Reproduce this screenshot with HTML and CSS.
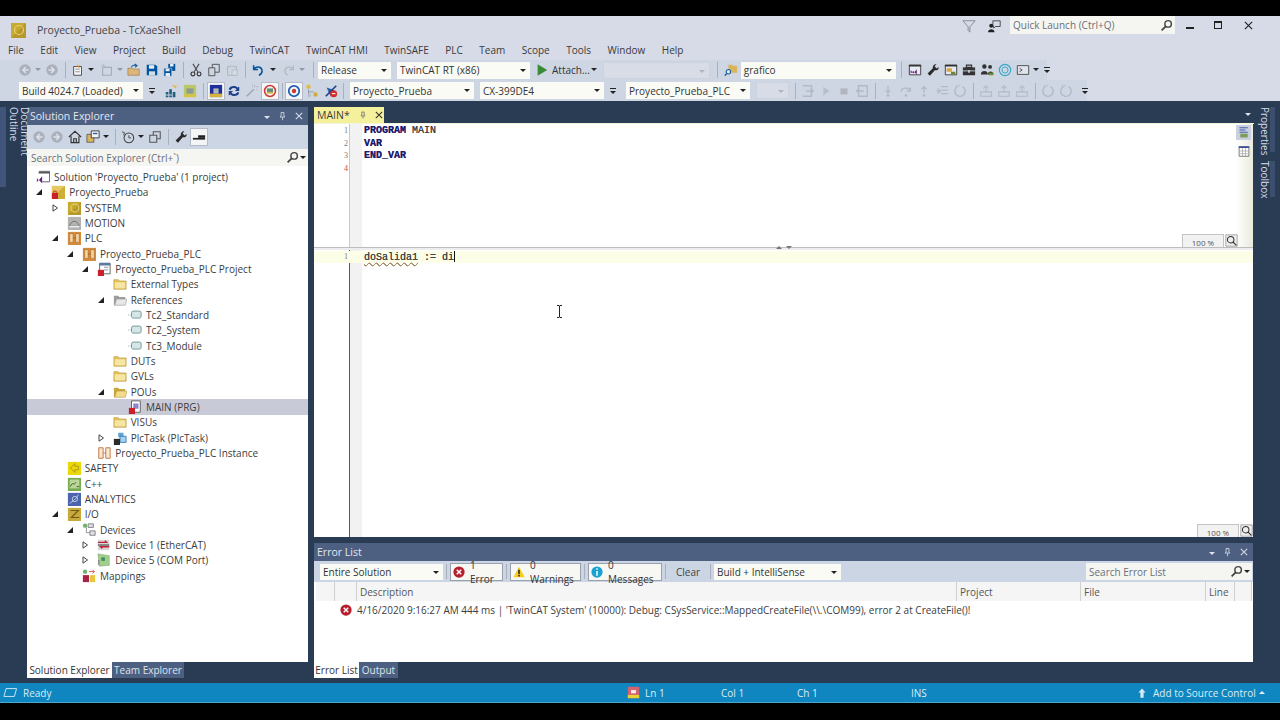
FILE: index.html
```html
<!DOCTYPE html>
<html lang="en">
<head>
<meta charset="utf-8">
<title>Proyecto_Prueba - TcXaeShell</title>
<link rel="stylesheet" href="styles.css">
</head>
<body>
<svg class="sprite" aria-hidden="true">
<symbol id="back" viewBox="0 0 16 16"><circle cx="8" cy="8" r="6.5" fill="#aab0bc"/><path d="M9 4.5 5.5 8 9 11.5M5.5 8H12" fill="none" stroke="#dfe3ea" stroke-width="1.6"/></symbol>
<symbol id="fwd" viewBox="0 0 16 16"><circle cx="8" cy="8" r="6.5" fill="#aab0bc"/><path d="M7 4.5 10.500 8 7 11.500M10.500 8H4" fill="none" stroke="#dfe3ea" stroke-width="1.6"/></symbol>
<symbol id="newp" viewBox="0 0 16 16"><path d="M3 4h9v10H3z" fill="#f4f4f4" stroke="#444"/><path d="M5 7h5M5 10h5" stroke="#888"/><path d="M7 1l1 2 2-1-1 2 2 1-3 0z" fill="#d9912f"/></symbol>
<symbol id="addi" viewBox="0 0 16 16"><path d="M3 5h10v9H3z" fill="none" stroke="#a7acb6" stroke-width="1.3"/><path d="M4 1v5M1.500 3.500h5" stroke="#b9bdc6" stroke-width="1.400"/></symbol>
<symbol id="open" viewBox="0 0 16 16"><path d="M1 6h5l1 1h7v7H1z" fill="#dcb67a" stroke="#8a6a2b" stroke-width=".6"/><path d="M5 5c1-3 4-3 6-2M9 1l2.500 2L9 5" fill="none" stroke="#1c5f9f" stroke-width="1.300"/></symbol>
<symbol id="save" viewBox="0 0 16 16"><path d="M2 2h10l2 2v10H2z" fill="#00539c"/><path d="M4.500 2.500h6v4h-6z" fill="#e6edf5"/><path d="M4.500 9.500h7V14h-7z" fill="#cfdcea"/></symbol>
<symbol id="saveall" viewBox="0 0 16 16"><path d="M6 1h8v8H6z" fill="#00539c"/><path d="M8 1h4v3H8z" fill="#e6edf5"/><path d="M1 6h9v9H1z" fill="#00539c" stroke="#ccd5e3" stroke-width=".7"/><path d="M3 6.500h4.500v3H3zM3 11.500h5V15H3z" fill="#e6edf5"/></symbol>
<symbol id="cut" viewBox="0 0 16 16"><path d="M4.500 1l5.500 9M11.500 1 6 10" stroke="#444" stroke-width="1.200" fill="none"/><circle cx="4.500" cy="12.500" r="2.200" fill="none" stroke="#333" stroke-width="1.300"/><circle cx="11.500" cy="12.500" r="2.200" fill="none" stroke="#333" stroke-width="1.300"/></symbol>
<symbol id="copy" viewBox="0 0 16 16"><path d="M6 1.500h8v9H6z" fill="none" stroke="#555" stroke-width="1.100"/><path d="M2 5.500h7v9H2z" fill="#ccd5e3" stroke="#555" stroke-width="1.100"/></symbol>
<symbol id="paste" viewBox="0 0 16 16"><path d="M3 4h10v10H3z" fill="none" stroke="#adb2bc" stroke-width="1.100"/><path d="M6 2h4v3H6z" fill="#c4c9d2"/><path d="M8 8h6v6H8z" fill="#d6dbe5" stroke="#b6bbc4"/></symbol>
<symbol id="undo" viewBox="0 0 16 16"><path d="M3 2.500v5h5M3.500 7c2-3.500 8-3 9 1 .5 2.500-1 5-3.500 6" fill="none" stroke="#00539c" stroke-width="1.700"/></symbol>
<symbol id="redo" viewBox="0 0 16 16"><path d="M13 2.500v5H8M12.500 7c-2-3.500-8-3-9 1-.5 2.500 1 5 3.500 6" fill="none" stroke="#b2b7c0" stroke-width="1.500"/></symbol>
<symbol id="play" viewBox="0 0 16 16"><path d="M3 1.500 14 8 3 14.500z" fill="#388a34"/></symbol>
<symbol id="findf" viewBox="0 0 16 16"><path d="M5 2h4l1 1h5v8H5z" fill="#d9b45c"/><circle cx="5" cy="10" r="2.500" fill="#dfeaf5" stroke="#1c5f9f" stroke-width="1.200"/><path d="M3 12l-2 2.500" stroke="#1c5f9f" stroke-width="1.600"/></symbol>
<symbol id="winvs" viewBox="0 0 16 16"><path d="M1.500 2.500h13v11h-13z" fill="#e8ebf2" stroke="#333"/><path d="M1 2h14v2H1z" fill="#333"/><path d="M3 8l3 4 4-5v6L6 9l-3 3z" fill="#68217a"/></symbol>
<symbol id="wrench" viewBox="0 0 16 16"><path d="M14.500 4.500c.4 2.600-2 4.600-4.500 3.700L4.500 14.500 1.800 12l6-6C7.200 3.200 9.400 1 12 1.500L9.800 3.800l2.300 2.400z" fill="#2a2a2a"/></symbol>
<symbol id="winaz" viewBox="0 0 16 16"><path d="M1.500 2.500h13v11h-13z" fill="#e8ebf2" stroke="#333"/><path d="M1 2h14v2H1z" fill="#333"/><path d="M3 6h6v4H3z" fill="#d9a441"/><path d="M8 10h5v3H8z" fill="#6a8a2f"/></symbol>
<symbol id="box" viewBox="0 0 16 16"><path d="M1 5h14v9H1z" fill="#333"/><path d="M5 2.500h6V5H5z" fill="none" stroke="#333" stroke-width="1.300"/><path d="M1 9h14" stroke="#ccd5e3"/><path d="M7 8h2v3H7z" fill="#ccd5e3"/></symbol>
<symbol id="people" viewBox="0 0 16 16"><circle cx="5" cy="4" r="2.500" fill="#333"/><circle cx="11.500" cy="4.500" r="2.200" fill="#333"/><path d="M1 13c0-5 8-5 8 0zM9 13c0-5 6.500-4 6.500 0z" fill="#333"/><path d="M10 11h5v3h-5z" fill="#6a8a2f"/></symbol>
<symbol id="cc" viewBox="0 0 16 16"><circle cx="8" cy="8" r="6.500" fill="none" stroke="#3aa8c9" stroke-width="1.300"/><circle cx="8" cy="8" r="3.500" fill="none" stroke="#3aa8c9" stroke-width="1.100"/></symbol>
<symbol id="term" viewBox="0 0 16 16"><path d="M1.500 3h13v10h-13z" fill="#dfe3ec" stroke="#444"/><path d="M4 6l3 2-3 2" fill="none" stroke="#444"/></symbol>
<symbol id="bars" viewBox="0 0 16 16"><path d="M2 9h3v3H2zM2 13h3v2H2zM6 13h3v2H6zM6 6h3v6H6zM10 9h3v6h-3z" fill="#1c5f7f"/><path d="M9 1l4 4 2-3z" fill="#e1b84b"/></symbol>
<symbol id="gold" viewBox="0 0 16 16"><path d="M1 1h14v14H1z" fill="#b9c96a"/><path d="M1 12h14v3H1z" fill="#d9c33c"/><path d="M4 5h8v6H4z" fill="#8f9a93"/></symbol>
<symbol id="screen" viewBox="0 0 16 16"><path d="M1 1h14v14H1z" fill="#1c2f9a"/><path d="M1 11h14v4H1z" fill="#d6b13c"/><path d="M5 5h6v6H5z" fill="#b0b5b8"/></symbol>
<symbol id="sync" viewBox="0 0 16 16"><path d="M2 6c1-4 7-5 10-2l2-1v5H9l2-2C9 4 6 4 4 7zM14 10c-1 4-7 5-10 2l-2 1V8h5L5 10c2 2 5 2 7-1z" fill="#1e3f8a"/></symbol>
<symbol id="wand" viewBox="0 0 16 16"><path d="M2 14 10 6" stroke="#a3a8b2" stroke-width="2"/><path d="M11 1v3M13 3h2M9 3h-1M13 6l1 1M9 1 8 0" stroke="#b4b9c2" stroke-width="1.200"/></symbol>
<symbol id="redc" viewBox="0 0 16 16"><circle cx="8" cy="8" r="6.200" fill="none" stroke="#d03a30" stroke-width="1.800"/><path d="M4.500 5h7v5h-7z" fill="#5a8f7a"/><path d="M4.500 9h7v2h-7z" fill="#d6b13c"/></symbol>
<symbol id="bluec" viewBox="0 0 16 16"><circle cx="8" cy="8" r="6" fill="none" stroke="#1c5fb5" stroke-width="2"/><circle cx="8" cy="8" r="2.500" fill="#d03a30"/></symbol>
<symbol id="ydots" viewBox="0 0 16 16"><circle cx="4" cy="3" r="2.500" fill="#e3bb3f"/><path d="M4 6v6M4 9h6" stroke="#8d96a6"/><circle cx="5" cy="13" r="2" fill="#b8bfc9"/><circle cx="12" cy="12" r="2.500" fill="#d2a93a"/></symbol>
<symbol id="cross" viewBox="0 0 16 16"><path d="M3 4l9 3-4 7-2-3z" fill="#2a5fb0"/><path d="M2 14 14 2" stroke="#1a3f8a" stroke-width="1.800"/><circle cx="11" cy="11" r="4" fill="#d52b2b"/><path d="M9 11h4" stroke="#fff" stroke-width="1.200"/></symbol>
<symbol id="dstep" viewBox="0 0 16 16"><path d="M2 2h10v12H2" fill="none" stroke="#b4b9c3" stroke-width="1.500"/><path d="M6 8h8M11 5l3 3-3 3" fill="none" stroke="#b4b9c3" stroke-width="1.500"/></symbol>
<symbol id="dplay" viewBox="0 0 16 16"><path d="M5 3l7 5-7 5z" fill="#b9bec8"/></symbol>
<symbol id="dstop" viewBox="0 0 16 16"><path d="M4 5h8v7H4z" fill="#b0b5bf"/></symbol>
<symbol id="dout" viewBox="0 0 16 16"><path d="M14 2H4v12h10z" fill="none" stroke="#b4b9c3" stroke-width="1.500"/><path d="M10 8H1M5 5 2 8l3 3" fill="none" stroke="#b4b9c3" stroke-width="1.500"/></symbol>
<symbol id="ddown" viewBox="0 0 16 16"><path d="M8 2v7M5 7l3 3 3-3" fill="none" stroke="#b4b9c3" stroke-width="1.500"/><circle cx="8" cy="13" r="1.500" fill="#b4b9c3"/></symbol>
<symbol id="dover" viewBox="0 0 16 16"><path d="M2 9c1-5 9-6 11-1M13 4v4H9" fill="none" stroke="#b4b9c3" stroke-width="1.500"/><circle cx="8" cy="13" r="1.500" fill="#b4b9c3"/></symbol>
<symbol id="dup" viewBox="0 0 16 16"><path d="M8 10V3M5 6l3-3 3 3" fill="none" stroke="#b4b9c3" stroke-width="1.500"/><circle cx="8" cy="13" r="1.500" fill="#b4b9c3"/></symbol>
<symbol id="dlist" viewBox="0 0 16 16"><path d="M1 8h4M3 5l3 3-3 3M7 3h8M7 7h8M7 11h8" fill="none" stroke="#b4b9c3" stroke-width="1.400"/></symbol>
<symbol id="dring" viewBox="0 0 16 16"><path d="M5 3a6 6 0 1 0 6 0" fill="none" stroke="#b4b9c3" stroke-width="1.600"/><path d="M3 2h5" stroke="#b4b9c3"/></symbol>
<symbol id="dtray" viewBox="0 0 16 16"><path d="M2 9v5h12V9z" fill="none" stroke="#b4b9c3" stroke-width="1.200"/><path d="M8 3v6M5 5l3-3 3 3" fill="none" stroke="#b4b9c3" stroke-width="1.200"/></symbol>
<symbol id="mag" viewBox="0 0 16 16"><circle cx="10" cy="6" r="4" fill="none" stroke="#444" stroke-width="1.800"/><path d="M7 9l-5 5" stroke="#444" stroke-width="2.200"/></symbol>
<symbol id="home" viewBox="0 0 16 16"><path d="M1 8l7-6.500L15 8M3.500 7v7.500h9V7M6.500 14.500V10h3v4.500" fill="none" stroke="#333" stroke-width="1.300"/></symbol>
<symbol id="filefolders" viewBox="0 0 16 16"><path d="M1 5h8v9H1z" fill="#d9b45c" stroke="#333" stroke-width=".7"/><path d="M6 1h9v8H6z" fill="#eef1f6" stroke="#333"/><path d="M8 4h5" stroke="#1c5f9f" stroke-width="1.500"/></symbol>
<symbol id="clock" viewBox="0 0 16 16"><circle cx="9" cy="9" r="5.500" fill="none" stroke="#444" stroke-width="1.200"/><path d="M9 6v3h2.500M1 2l3 1-1 3" fill="none" stroke="#444"/></symbol>
<symbol id="stack" viewBox="0 0 16 16"><path d="M6 2h8v8H6z" fill="none" stroke="#555" stroke-width="1.200"/><path d="M2 6h8v8H2z" fill="#ccd5e3" stroke="#555" stroke-width="1.200"/></symbol>
<symbol id="pinbar" viewBox="0 0 16 16"><path d="M1 9h14v2H1z" fill="#222"/><path d="M7 6h8v3H7z" fill="#222"/></symbol>
<symbol id="pin" viewBox="0 0 10 12"><path d="M3 1h4v5l1.500 1.500h-7L3 6zM5 7.500V12" fill="none" stroke="#d5dbe6" stroke-width="1.200"/></symbol>
<symbol id="x" viewBox="0 0 10 10"><path d="M1 1l8 8M9 1 1 9" stroke="currentColor" stroke-width="1.300"/></symbol>
<symbol id="tri" viewBox="0 0 8 8"><path d="M7 1v6H1z" fill="#222"/></symbol>
<symbol id="tro" viewBox="0 0 8 8"><path d="M2 .8 6.500 4 2 7.200z" fill="#fff" stroke="#444" stroke-width="1"/></symbol>
<symbol id="sln" viewBox="0 0 16 16"><path d="M3.500 1.500h12v12h-9" fill="#fff" stroke="#555"/><path d="M3 2h13v2H3z" fill="#555"/><path d="M1 9l2 3 4-5v8L3 11l-2 3z" fill="#68217a"/></symbol>
<symbol id="tcp" viewBox="0 0 16 16"><path d="M1 1h15v15H1z" fill="#cfae37"/><path d="M1 1h15L1 14z" fill="#e3c960"/><path d="M1 9h7v7H1z" fill="#c9202c"/><path d="M3 9V7h3v2" fill="none" stroke="#c9202c"/></symbol>
<symbol id="sys" viewBox="0 0 16 16"><path d="M1 1h15v15H1z" fill="#c7ab2e"/><path d="M16 1v15H1z" fill="#b8982a"/><circle cx="9" cy="8" r="4.500" fill="none" stroke="#e3d276" stroke-width="1.200"/></symbol>
<symbol id="mot" viewBox="0 0 16 16"><path d="M1 1h15v15H1z" fill="#b3b3b1"/><path d="M3 11c2-6 8-7 11 0z" fill="none" stroke="#6a6a6a"/><path d="M3 11h11v2H3z" fill="#eee"/></symbol>
<symbol id="plc" viewBox="0 0 16 16"><path d="M1 1h15v15H1z" fill="#d38b3d"/><path d="M3 3h4v10H3zM10 3h4v10h-4z" fill="#f3d6a6" stroke="#a55d1c" stroke-width=".6"/><path d="M7 8h3" stroke="#a55d1c"/></symbol>
<symbol id="prj" viewBox="0 0 16 16"><path d="M3 1.500h12v12H3z" fill="#fff" stroke="#555"/><path d="M3 1h12v3H3z" fill="#5b7aa3"/><path d="M8 6h5M8 9h5" stroke="#888"/><path d="M1 9h7v7H1z" fill="#c9202c"/></symbol>
<symbol id="fold" viewBox="0 0 16 16"><path d="M1 3h5l1 1.500h8V14H1z" fill="#e4c04f" stroke="#b69a48" stroke-width=".7"/><path d="M2 6h12v7H2z" fill="#f6e6a6"/></symbol>
<symbol id="foldg" viewBox="0 0 16 16"><path d="M1 3h5l1 1.500h7V7H5l-2 7H1z" fill="#9d9d9d"/><path d="M4 7h12l-2 7H2z" fill="#e7e7e7" stroke="#9d9d9d" stroke-width=".7"/></symbol>
<symbol id="foldo" viewBox="0 0 16 16"><path d="M1 3h5l1 1.500h7V7H5l-2 7H1z" fill="#c9a73d"/><path d="M4 7h12l-2 7H2z" fill="#f2dc8a" stroke="#b69a48" stroke-width=".7"/></symbol>
<symbol id="refi" viewBox="0 0 16 16"><path d="M0 8h3" stroke="#8fb6b0" stroke-width="1.400" stroke-dasharray="1 1"/><rect x="4" y="3.500" width="11" height="8" rx="2" fill="#d4e7e6" stroke="#6d8f90"/></symbol>
<symbol id="pou" viewBox="0 0 16 16"><path d="M4 1h10v13H4z" fill="#fff" stroke="#555"/><path d="M6 4h6v6H6z" fill="#8a88c8"/><path d="M1 9h7v7H1z" fill="#c9202c"/></symbol>
<symbol id="task" viewBox="0 0 16 16"><path d="M6 2h6v5H6z" fill="#5ba3d9"/><path d="M8 6h7v7H8z" fill="#a7cfee" stroke="#3a7ab0"/><path d="M1 9h7v7H1z" fill="#2a2a2a"/></symbol>
<symbol id="inst" viewBox="0 0 16 16"><path d="M2 2h5v12H2zM10 2h5v12h-5z" fill="#f9e6d2" stroke="#bd6f33"/><path d="M7 8h3" stroke="#bd6f33"/></symbol>
<symbol id="saf" viewBox="0 0 16 16"><path d="M1 1h15v15H1z" fill="#ecd60c"/><path d="M4 8l5-5v3h4v4H9v3z" fill="none" stroke="#a59412"/></symbol>
<symbol id="cpp" viewBox="0 0 16 16"><path d="M1 1h15v15H1z" fill="#79ac52"/><path d="M3 3h11v10H3z" fill="#bcd69a"/><path d="M4 11c2-7 4 0 6-5M11 11h3" stroke="#2b5a1c" fill="none"/></symbol>
<symbol id="ana" viewBox="0 0 16 16"><path d="M1 1h15v15H1z" fill="#4c64ad"/><path d="M3 13c3-2 8-5 10-10" stroke="#ccd3ea" fill="none"/><circle cx="9" cy="8" r="3" fill="none" stroke="#ccd3ea"/></symbol>
<symbol id="io" viewBox="0 0 16 16"><path d="M1 1h15v15H1z" fill="#c7a93c"/><path d="M4 4h9l-8 8h9" fill="none" stroke="#6e5c1a" stroke-width="1.300"/></symbol>
<symbol id="dev" viewBox="0 0 16 16"><circle cx="3.500" cy="3" r="2.500" fill="#6db36d"/><path d="M7 1h6v4H7zM9 9h6v5H9z" fill="#dfe3ea" stroke="#777"/><path d="M5 5v6h4" fill="none" stroke="#888"/></symbol>
<symbol id="eth" viewBox="0 0 16 16"><path d="M1 2h13v12H1z" fill="#d7d5d8"/><path d="M1 5h10l-2-2M14 10H4l2 2" stroke="#c3202c" stroke-width="1.500" fill="none"/><path d="M1 8h13" stroke="#222"/></symbol>
<symbol id="com" viewBox="0 0 16 16"><path d="M1 1l13 2v11L3 15z" fill="#9fd08b" stroke="#7a9c72" stroke-width=".6"/><path d="M5 5h4v4H5z" fill="#3f8a5a"/><path d="M2 14V8" stroke="#666"/></symbol>
<symbol id="map" viewBox="0 0 16 16"><circle cx="3.500" cy="3" r="2.500" fill="#6db36d"/><path d="M8 3h6M12 1l2 2-2 2" stroke="#d04343" fill="none"/><path d="M1 7h7v8H1z" fill="#a8224b"/><path d="M9 7h6v8H9z" fill="#e6c63c"/></symbol>
<symbol id="err" viewBox="0 0 16 16"><circle cx="8" cy="8" r="7.500" fill="#b81f2c"/><path d="M5 5l6 6M11 5l-6 6" stroke="#fff" stroke-width="2"/></symbol>
<symbol id="warn" viewBox="0 0 16 16"><path d="M8 1 15.500 15H.5z" fill="#f8cd1b"/><path d="M7 5h2v6H7zM7 12h2v2H7z" fill="#222"/></symbol>
<symbol id="info" viewBox="0 0 16 16"><circle cx="8" cy="8" r="7.500" fill="#1ba1d0"/><path d="M7 3h2v2H7zM7 6.500h2V13H7z" fill="#fff"/></symbol>
<symbol id="cmt" viewBox="0 0 16 16"><path d="M6 1h9v7H9l-2 2V8H6z" fill="none" stroke="#333"/><circle cx="4" cy="7" r="2.500" fill="#222"/><path d="M0 15c0-5 8-5 8 0z" fill="#222"/></symbol>
<symbol id="funnel" viewBox="0 0 16 16"><path d="M1 2h14L9 9v6L7 13V9z" fill="none" stroke="#7f858f"/></symbol>
<symbol id="status" viewBox="0 0 16 12"><path d="M3.500 1.500h12L13 10.500H1z" fill="none" stroke="#cfe5f2" stroke-width="1.100"/></symbol>
<symbol id="lock" viewBox="0 0 16 16"><path d="M1 1h14v14H1z" fill="#d5636f"/><path d="M1 11h14v4H1z" fill="#e9d12f"/><path d="M5 5h6v4H5z" fill="#eee"/></symbol>
<symbol id="uparr" viewBox="0 0 10 12"><path d="M5 .5 9.500 5.500H7V12H3V5.500H.5z" fill="#d6e9f5"/></symbol>
<symbol id="tbl" viewBox="0 0 16 16"><path d="M1.500 2h13v13h-13z" fill="#fff" stroke="#555"/><path d="M1 2h14v2H1z" fill="#3c4fa3"/><path d="M1.500 8h13M1.500 11.500h13M6 4v11M10 4v11" stroke="#aaa"/></symbol>
<symbol id="txt" viewBox="0 0 16 16"><path d="M2 1h11M2 4h8M2 7h11" stroke="#3c4fa3" stroke-width="1.200"/><path d="M3 9h10v5H3z" fill="#7b9c5a"/></symbol>
<symbol id="zm" viewBox="0 0 16 16"><path d="M1 1h14v14H1z" fill="#eee" stroke="#999"/><circle cx="7" cy="7" r="4" fill="none" stroke="#333" stroke-width="1.300"/><path d="M10 10l4 4" stroke="#333" stroke-width="1.500"/></symbol>
</svg>

<div class="frame">
  <header class="titlebar">
    <svg class="logo"><use href="#sys"/></svg>
    <span class="apptitle">Proyecto_Prueba - TcXaeShell</span>
    <svg class="ic16 funnel"><use href="#funnel"/></svg>
    <svg class="ic16 cmt"><use href="#cmt"/></svg>
    <div class="quick"><span>Quick Launch (Ctrl+Q)</span><svg class="ic14"><use href="#mag"/></svg></div>
    <div class="winbtns">
      <span class="minbtn"></span>
      <span class="restore"></span>
      <svg class="closeb"><use href="#x"/></svg>
    </div>
  </header>

  <nav class="menu">
    <span>File</span><span>Edit</span><span>View</span><span>Project</span><span>Build</span><span>Debug</span><span>TwinCAT</span><span>TwinCAT HMI</span><span>TwinSAFE</span><span>PLC</span><span>Team</span><span>Scope</span><span>Tools</span><span>Window</span><span>Help</span>
  </nav>

  <div class="toolbar t1">
    <i class="sp w9"></i><i class="grip"></i><i class="sp w3"></i>
    <span class="b"><svg><use href="#back"/></svg></span><span class="a dim"></span><span class="b"><svg><use href="#fwd"/></svg></span><i class="sep"></i>
    <span class="b"><svg><use href="#newp"/></svg></span><span class="a"></span><i class="sp w2"></i><span class="b"><svg><use href="#addi"/></svg></span><span class="a dim"></span>
    <span class="b"><svg><use href="#open"/></svg></span><span class="b"><svg><use href="#save"/></svg></span><span class="b"><svg><use href="#saveall"/></svg></span><i class="sep"></i>
    <span class="b"><svg><use href="#cut"/></svg></span><span class="b"><svg><use href="#copy"/></svg></span><span class="b"><svg><use href="#paste"/></svg></span><i class="sep"></i>
    <span class="b"><svg><use href="#undo"/></svg></span><i class="sp w2"></i><span class="a"></span><i class="sp w2"></i><span class="b"><svg><use href="#redo"/></svg></span><span class="a dim"></span><i class="sp w2"></i>
    <i class="sep"></i>
    <span class="combo c73 ml1">Release</span><i class="sp w6"></i><span class="combo c133">TwinCAT RT (x86)</span>
    <i class="sp w3"></i><span class="b"><svg><use href="#play"/></svg></span><i class="sp w1"></i><span class="attach">Attach...</span><span class="a"></span>
    <i class="sp w4"></i><span class="combo off c107"></span><i class="sp w4"></i><i class="sep"></i>
    <span class="b"><svg><use href="#findf"/></svg></span><span class="combo c155 ml1">grafico</span><i class="sp w2"></i><i class="sep"></i>
    <span class="b"><svg><use href="#winvs"/></svg></span><span class="b"><svg><use href="#wrench"/></svg></span><span class="b"><svg><use href="#winaz"/></svg></span><span class="b"><svg><use href="#box"/></svg></span><span class="b"><svg><use href="#people"/></svg></span><span class="b"><svg><use href="#cc"/></svg></span><span class="b"><svg><use href="#term"/></svg></span><span class="a"></span><span class="ovf"></span>
  </div>

  <div class="toolbar t2">
    <i class="sp w9"></i><i class="grip"></i><i class="sp w6"></i>
    <span class="combo c124">Build 4024.7 (Loaded)</span><span class="ovf ovf2"></span><i class="sp w3"></i><i class="grip"></i>
    <i class="sp w1"></i><span class="b"><svg><use href="#bars"/></svg></span><i class="sp w1"></i><span class="b"><svg><use href="#gold"/></svg></span><i class="sep"></i>
    <span class="b on"><svg><use href="#screen"/></svg></span><span class="b"><svg><use href="#sync"/></svg></span><span class="b"><svg><use href="#wand"/></svg></span><span class="b on"><svg><use href="#redc"/></svg></span><i class="sep sep4"></i>
    <span class="b on"><svg><use href="#bluec"/></svg></span><span class="b"><svg><use href="#ydots"/></svg></span><i class="sp w1"></i><span class="b"><svg><use href="#cross"/></svg></span><i class="sep sep4"></i>
    <i class="sp w4"></i><span class="combo c124">Proyecto_Prueba</span><i class="sp w6"></i><span class="combo c124">CX-399DE4</span><span class="ovf ovf2"></span><i class="sp w3"></i><i class="grip"></i><i class="sp w4"></i>
    <span class="combo c124">Proyecto_Prueba_PLC</span><i class="sp w6"></i><span class="combo off c33"></span><i class="sp w2"></i><i class="sep"></i>
    <span class="b"><svg><use href="#dstep"/></svg></span><span class="b"><svg><use href="#dplay"/></svg></span><span class="b"><svg><use href="#dstop"/></svg></span><span class="b"><svg><use href="#dout"/></svg></span><i class="sep"></i>
    <span class="b"><svg><use href="#ddown"/></svg></span><span class="b"><svg><use href="#dover"/></svg></span><span class="b"><svg><use href="#dup"/></svg></span><span class="b"><svg><use href="#dlist"/></svg></span><span class="b"><svg><use href="#dring"/></svg></span><i class="sep"></i>
    <span class="b"><svg><use href="#dtray"/></svg></span><span class="b"><svg><use href="#dtray"/></svg></span><span class="b"><svg><use href="#dtray"/></svg></span><i class="sep"></i>
    <span class="b"><svg><use href="#dring"/></svg></span><span class="b"><svg><use href="#dring"/></svg></span><span class="ovf ovf3"></span>
  </div>

  <main class="work">
    <aside class="rail left"><div class="vtab"><span>Document Outline</span></div></aside>

    <section class="solution">
      <div class="ptitle"><span>Solution Explorer</span><span class="pbtns"><i class="dn"></i><svg class="pinic"><use href="#pin"/></svg><svg class="xic"><use href="#x"/></svg></span></div>
      <div class="stool">
        <span class="b"><svg><use href="#back"/></svg></span><span class="b"><svg><use href="#fwd"/></svg></span><span class="b"><svg><use href="#home"/></svg></span><span class="b"><svg><use href="#filefolders"/></svg></span><span class="a"></span><i class="sep"></i>
        <span class="b"><svg><use href="#clock"/></svg></span><span class="a"></span><span class="b"><svg><use href="#stack"/></svg></span><i class="sep"></i>
        <span class="b"><svg><use href="#wrench"/></svg></span><span class="b on"><svg><use href="#pinbar"/></svg></span>
      </div>
      <div class="psearch"><span>Search Solution Explorer (Ctrl+`)</span><svg class="ic14"><use href="#mag"/></svg><span class="a"></span></div>
      <div class="tree">
        <div class="row"><span class="tw"></span><svg class="ti"><use href="#sln"/></svg><span>Solution 'Proyecto_Prueba' (1 project)</span></div>
        <div class="row l1"><span class="tw"><svg><use href="#tri"/></svg></span><svg class="ti"><use href="#tcp"/></svg><span>Proyecto_Prueba</span></div>
        <div class="row l2"><span class="tw"><svg><use href="#tro"/></svg></span><svg class="ti"><use href="#sys"/></svg><span>SYSTEM</span></div>
        <div class="row l2"><span class="tw"></span><svg class="ti"><use href="#mot"/></svg><span>MOTION</span></div>
        <div class="row l2"><span class="tw"><svg><use href="#tri"/></svg></span><svg class="ti"><use href="#plc"/></svg><span>PLC</span></div>
        <div class="row l3"><span class="tw"><svg><use href="#tri"/></svg></span><svg class="ti"><use href="#plc"/></svg><span>Proyecto_Prueba_PLC</span></div>
        <div class="row l4"><span class="tw"><svg><use href="#tri"/></svg></span><svg class="ti"><use href="#prj"/></svg><span>Proyecto_Prueba_PLC Project</span></div>
        <div class="row l5"><span class="tw"></span><svg class="ti"><use href="#fold"/></svg><span>External Types</span></div>
        <div class="row l5"><span class="tw"><svg><use href="#tri"/></svg></span><svg class="ti"><use href="#foldg"/></svg><span>References</span></div>
        <div class="row l6"><span class="tw"></span><svg class="ti"><use href="#refi"/></svg><span>Tc2_Standard</span></div>
        <div class="row l6"><span class="tw"></span><svg class="ti"><use href="#refi"/></svg><span>Tc2_System</span></div>
        <div class="row l6"><span class="tw"></span><svg class="ti"><use href="#refi"/></svg><span>Tc3_Module</span></div>
        <div class="row l5"><span class="tw"></span><svg class="ti"><use href="#fold"/></svg><span>DUTs</span></div>
        <div class="row l5"><span class="tw"></span><svg class="ti"><use href="#fold"/></svg><span>GVLs</span></div>
        <div class="row l5"><span class="tw"><svg><use href="#tri"/></svg></span><svg class="ti"><use href="#foldo"/></svg><span>POUs</span></div>
        <div class="row l6 sel"><span class="tw"></span><svg class="ti"><use href="#pou"/></svg><span>MAIN (PRG)</span></div>
        <div class="row l5"><span class="tw"></span><svg class="ti"><use href="#fold"/></svg><span>VISUs</span></div>
        <div class="row l5"><span class="tw"><svg><use href="#tro"/></svg></span><svg class="ti"><use href="#task"/></svg><span>PlcTask (PlcTask)</span></div>
        <div class="row l4"><span class="tw"></span><svg class="ti"><use href="#inst"/></svg><span>Proyecto_Prueba_PLC Instance</span></div>
        <div class="row l2"><span class="tw"></span><svg class="ti"><use href="#saf"/></svg><span>SAFETY</span></div>
        <div class="row l2"><span class="tw"></span><svg class="ti"><use href="#cpp"/></svg><span>C++</span></div>
        <div class="row l2"><span class="tw"></span><svg class="ti"><use href="#ana"/></svg><span>ANALYTICS</span></div>
        <div class="row l2"><span class="tw"><svg><use href="#tri"/></svg></span><svg class="ti"><use href="#io"/></svg><span>I/O</span></div>
        <div class="row l3"><span class="tw"><svg><use href="#tri"/></svg></span><svg class="ti"><use href="#dev"/></svg><span>Devices</span></div>
        <div class="row l4"><span class="tw"><svg><use href="#tro"/></svg></span><svg class="ti"><use href="#eth"/></svg><span>Device 1 (EtherCAT)</span></div>
        <div class="row l4"><span class="tw"><svg><use href="#tro"/></svg></span><svg class="ti"><use href="#com"/></svg><span>Device 5 (COM Port)</span></div>
        <div class="row l3"><span class="tw"></span><svg class="ti"><use href="#map"/></svg><span>Mappings</span></div>
      </div>
      <div class="ptabs"><span class="ptab act st1">Solution Explorer</span><span class="ptab st2">Team Explorer</span></div>
    </section>

    <section class="center">
      <div class="docwell">
        <div class="doctab"><span>MAIN*</span><svg class="dpin"><use href="#pin"/></svg><svg class="dx"><use href="#x"/></svg></div>
        <i class="dn welldn"></i>
      </div>
      <div class="editor upper">
        <div class="gutter"><span>1</span><span>2</span><span>3</span><span class="red">4</span></div>
        <div class="margin"></div>
        <pre class="code"><b>PROGRAM</b> MAIN
<b>VAR</b>
<b>END_VAR</b></pre>
        <div class="side"><span class="sideb on"><svg><use href="#txt"/></svg></span><span class="sideb"><svg><use href="#tbl"/></svg></span></div>
        <div class="zoombox"><span class="zval">100 %</span><svg class="zmi"><use href="#zm"/></svg></div>
      </div>
      <div class="splitter"><i class="up"></i><i class="down"></i></div>
      <div class="editor lower">
        <div class="curline"></div>
        <div class="gutter teal"><span>1</span></div>
        <div class="margin"></div>
        <pre class="code"><span class="squig">doSalida1</span> := di<i class="caret"></i></pre>
        <svg class="ibeam" viewBox="0 0 7 13"><path d="M1 .5h2l.5.5.5-.5h2M3.500 1v11M1 12.500h2l.5-.5.5.5h2" fill="none" stroke="#222"/></svg>
        <div class="zoombox zb2"><span class="zval">100 %</span><svg class="zmi"><use href="#zm"/></svg></div>
      </div>

      <div class="errpanel">
        <div class="ptitle"><span>Error List</span><span class="pbtns"><i class="dn"></i><svg class="pinic"><use href="#pin"/></svg><svg class="xic"><use href="#x"/></svg></span></div>
        <div class="etool">
          <span class="combo c123">Entire Solution</span>
          <i class="esep"></i><span class="ebtn e1"><svg><use href="#err"/></svg>1 Error</span>
          <i class="esep"></i><span class="ebtn e2"><svg><use href="#warn"/></svg>0 Warnings</span>
          <i class="esep"></i><span class="ebtn e3"><svg><use href="#info"/></svg>0 Messages</span>
          <i class="esep"></i><span class="clear">Clear</span><i class="esep"></i>
          <span class="combo c127">Build + IntelliSense</span>
          <div class="esearch"><span>Search Error List</span><svg class="ic14"><use href="#mag"/></svg><span class="a"></span></div>
        </div>
        <div class="ehead">
          <span class="h0"></span><span class="h1"></span><span class="h2">Description</span><span class="h3">Project</span><span class="h4">File</span><span class="h5">Line</span><span class="h6"></span>
        </div>
        <div class="elist">
          <div class="erow"><svg><use href="#err"/></svg><span>4/16/2020 9:16:27 AM 444 ms | 'TwinCAT System' (10000): Debug: CSysService::MappedCreateFile(\\.\COM99), error 2 at CreateFile()!</span></div>
        </div>
      </div>
      <div class="ptabs"><span class="ptab act et1">Error List</span><span class="ptab et2">Output</span></div>
    </section>

    <aside class="rail right">
      <div class="vtab"><span>Properties</span></div>
      <div class="vtab vt2"><span>Toolbox</span></div>
    </aside>
  </main>

  <footer class="statusbar">
    <svg class="st-ic"><use href="#status"/></svg>
    <span class="ready">Ready</span>
    <svg class="st-lock"><use href="#lock"/></svg>
    <span class="s-ln">Ln 1</span><span class="s-col">Col 1</span><span class="s-ch">Ch 1</span><span class="s-ins">INS</span>
    <svg class="st-up"><use href="#uparr"/></svg>
    <span class="s-src">Add to Source Control</span><i class="upcaret"></i>
  </footer>
</div>
</body>
</html>
```

FILE: styles.css
```css
* { box-sizing: border-box; }
html, body { margin: 0; height: 720px; overflow: hidden; background: #000; }
body { font-family: "Open Sans", "Noto Sans", sans-serif; font-size: 10px; color: #333; }
.sprite { display: none; }
svg { display: block; flex: none; }
i { font-style: normal; display: block; flex: none; }

.frame { margin-top: 16px; height: 687px; display: flex; flex-direction: column; background: #d6dbe7; }

.titlebar { height: 24px; flex: none; display: flex; align-items: center; }
.logo { width: 16px; height: 16px; margin: 4px 0 0 10px; }
.apptitle { margin: 4px 0 0 11px; width: 925px; font-size: 10.5px; color: #444; }
.ic16 { width: 16px; height: 16px; }
.ic14 { width: 13px; height: 13px; }
.funnel { margin: -4px 0 0 0; width: 14px; }
.cmt { margin: -4px 0 0 12px; width: 13px; height: 13px; }
.quick { width: 165px; height: 18px; margin: -6px 0 0 9px; background: #f5f6f2; display: flex; align-items: center; justify-content: space-between; padding: 0 1px 0 3px; color: #6a6f78; }
.quick .ic14 { margin-right: 1px; }
.winbtns { display: flex; align-items: center; margin: -6px 0 0 11px; }
.minbtn { width: 8px; height: 2px; background: #222; margin-top: 5px; }
.restore { width: 8px; height: 8px; border: 1px solid #222; border-top-width: 2px; margin-left: 20px; }
.closeb { width: 9px; height: 9px; margin-left: 22px; color: #222; }

.menu { height: 20px; flex: none; display: flex; align-items: center; gap: 16.500px; padding-left: 8px; font-size: 10px; color: #3a3a3a; }

.toolbar { flex: none; display: flex; align-items: center; background: #cfd6e3; }
.t1 { height: 20px; width: 1047px; }
.t2 { height: 21px; width: 1087px; }
.grip { width: 4px; height: 15px; background-image: radial-gradient(#9aa1ae 40%, transparent 45%); background-size: 2px 2px; }
.sp { height: 1px; }
.w1 { width: 1px; } .w2 { width: 2px; } .w3 { width: 3px; } .w4 { width: 4px; } .w6 { width: 6px; } .w9 { width: 9px; }
.b { width: 18px; height: 18px; flex: none; display: flex; align-items: center; justify-content: center; }
.b svg { width: 14px; height: 14px; }
.b.on { background: #f4f5f7; border: 1px solid #b5bac4; }
.a { width: 9px; height: 14px; flex: none; position: relative; }
.a::after { content: ""; position: absolute; left: 1px; top: 5px; border: 3px solid transparent; border-top: 3px solid #222; border-bottom: 0; }
.a.dim::after { border-top-color: #9298a3; }
.sep { width: 8px; height: 16px; background: linear-gradient(#a9afbb, #a9afbb) center / 1px 100% no-repeat; }
.sep4 { width: 6px; }
.ml1 { margin-left: 1px; }
.combo { height: 17px; flex: none; background: #fbfbf6; display: flex; align-items: center; padding-left: 3px; color: #333; position: relative; font-size: 10px; }
.combo::after { content: ""; position: absolute; right: 4px; top: 7px; border: 3px solid transparent; border-top: 3px solid #222; border-bottom: 0; }
.combo.off { background: #d8dce6; border: 1px solid #ccd2de; }
.combo.off::after { border-top-color: #aeb3bd; }
.c73 { width: 73px; } .c133 { width: 133px; } .c107 { width: 107px; } .c155 { width: 155px; }
.c124 { width: 124px; } .c33 { width: 33px; } .c123 { width: 123px; } .c127 { width: 127px; }
.attach { width: 38px; font-size: 10px; color: #333; }
.ovf { width: 10px; height: 10px; margin-left: 2px; position: relative; border-top: 0; }
.ovf::before { content: ""; position: absolute; left: 1px; top: 2px; width: 6px; height: 1px; background: #222; }
.ovf::after { content: ""; position: absolute; left: 1px; top: 5px; border: 3px solid transparent; border-top: 3px solid #222; border-bottom: 0; }
.ovf2 { margin-left: 5px; }
.ovf3 { margin-left: 6px; }

.work { height: 582px; flex: none; display: flex; background: #2a3b54; }
.rail { width: 27px; flex: none; padding-top: 6px; position: relative; }
.rail.right { width: 26px; }
.vtab { writing-mode: vertical-rl; color: #d8dde8; font-size: 10px; }
.left .vtab { border-left: 6px solid #41557a; height: 80px; padding-left: 2px; line-height: 11px; }
.right .vtab { height: 45px; padding-left: 5px; line-height: 11px; border-right: 5px solid #3c4f70; }
.right .vt2 { height: 36px; margin-top: 9px; }

.solution { width: 281px; flex: none; margin-top: 6px; height: 571px; display: flex; flex-direction: column; }
.ptitle { height: 18px; flex: none; background: #4d6082; color: #e3e7ef; display: flex; align-items: center; justify-content: space-between; padding: 0 5px 0 3px; font-size: 10.500px; }
.pbtns { display: flex; align-items: center; gap: 9px; }
.dn { width: 0; height: 0; border: 3px solid transparent; border-top: 3px solid #dfe3ec; border-bottom: 0; margin-top: 2px; }
.pinic { width: 7px; height: 10px; }
.xic { width: 8px; height: 8px; color: #d5dbe6; }
.stool { height: 24px; flex: none; background: #ccd5e3; display: flex; align-items: center; padding-left: 3px; }
.psearch { height: 17px; flex: none; background: #f5f6f2; display: flex; align-items: center; padding: 0 0 0 4px; color: #6a6f78; }
.psearch span:first-child { flex: 1; }
.tree { flex: 1; background: #fff; padding-top: 3.500px; min-height: 0; }
.row { height: 15.330px; display: flex; align-items: center; font-size: 10px; color: #3c3c3c; white-space: nowrap; }
.l1 { padding-left: 15.330px; } .l2 { padding-left: 30.660px; } .l3 { padding-left: 46px; }
.l4 { padding-left: 61.330px; } .l5 { padding-left: 76.660px; } .l6 { padding-left: 92px; }
.tw { width: 9px; flex: none; }
.tw svg { width: 8px; height: 8px; margin-left: -7px; }
.ti { width: 14px; height: 14px; margin-right: 4px; }
.sel { background: #c9cad8; }
.ptabs { height: 16px; flex: none; display: flex; }
.ptab { display: flex; align-items: center; justify-content: center; color: #dfe4ec; background: #4d6082; font-size: 10px; }
.ptab.act { background: #fff; color: #333; }
.st1 { width: 85px; } .st2 { width: 72px; }
.et1 { width: 45px; } .et2 { width: 39px; }

.center { width: 940px; flex: none; margin: 0 0 0 6px; display: flex; flex-direction: column; padding-top: 6px; height: 577px; }
.docwell { height: 17px; flex: none; display: flex; align-items: flex-start; justify-content: space-between; border-bottom: 1px solid #f4f6dc; }
.doctab { width: 70px; height: 16px; background: #f5f09c; display: flex; align-items: center; padding-left: 3px; color: #3c3c3c; font-size: 10.500px; }
.dpin { width: 6px; height: 8px; margin-left: 10px; filter: brightness(.45); }
.dx { width: 8px; height: 8px; margin-left: 9px; color: #333; }
.welldn { margin: 6px 3px 0 0; }

.editor { background: #fff; position: relative; display: flex; flex: none; }
.upper { height: 123px; width: 939px; background: linear-gradient(90deg, #fff 922px, #e9ebdc 939px); }
.lower { height: 287px; width: 939px; }
.gutter { width: 35px; flex: none; display: flex; flex-direction: column; align-items: flex-end; padding-top: 1px; font: 8px/12.670px "Liberation Serif", serif; color: #777; border-right: 0; }
.gutter .red { color: #b84a55; }
.margin { width: 13px; flex: none; background: #f2f2f2; border-left: 1px solid #c9c9c9; margin-left: 0; }
.gutter { padding-right: 1px; }
.teal + .margin { border-left: 1px solid #14786e; }
.code { margin: 0; padding: 1px 0 0 2px; font: 10px/12.670px "Liberation Mono", monospace; color: #444; position: relative; text-shadow: 0 0 .4px #444; }
.code b { color: #1c1a78; font-weight: bold; }
.squig { text-decoration: underline wavy #b79a5c 1px; text-underline-offset: 2px; }
.caret { display: inline-block; width: 1px; height: 11px; background: #111; vertical-align: -2px; }
.curline { position: absolute; left: 0; right: 0; top: 1px; height: 12px; background: #fdfee8; }
.lower .gutter, .lower .code { position: relative; }
.side { position: absolute; right: 1px; top: 1px; width: 16px; display: flex; flex-direction: column; gap: 3px; }
.sideb { width: 15px; height: 15px; display: flex; align-items: center; justify-content: center; }
.sideb.on { background: #c9d1e0; }
.sideb svg { width: 12px; height: 12px; }
.zoombox { position: absolute; right: 15px; bottom: 0; height: 13px; display: flex; align-items: flex-start; }
.zb2 { right: 0; }
.zval { width: 42px; height: 13px; overflow: hidden; background: #f2f2f2; border: 1px solid #c4c4c4; border-bottom: 0; text-align: center; font-size: 8px; line-height: 15px; color: #555; }
.zmi { width: 13px; height: 13px; margin-left: 1px; }
.splitter { height: 3px; width: 939px; flex: none; background: #ededed; border-top: 1px solid #bdbdbd; position: relative; }
.splitter .up, .splitter .down { position: absolute; top: -2px; border: 3px solid transparent; }
.splitter .up { left: 462px; border-bottom: 3px solid #777; border-top: 0; }
.splitter .down { left: 472px; border-top: 3px solid #777; border-bottom: 0; }
.ibeam { position: absolute; left: 242px; top: 55px; width: 7px; height: 13px; }

.errpanel { margin-top: 6px; height: 119px; flex: none; display: flex; flex-direction: column; background: #fff; width: 939px; }
.etool { height: 21px; flex: none; background: #ccd5e3; display: flex; align-items: center; padding-left: 6px; position: relative; font-size: 10px; }
.etool .combo { height: 16px; }
.esep { width: 1px; height: 15px; background: #a9afbb; margin: 0 3px; }
.ebtn { height: 18px; background: #f7f7f4; border: 1px solid #9aa1ae; display: flex; align-items: center; padding-left: 2px; gap: 5px; color: #333; flex: none; }
.ebtn svg { width: 12px; height: 12px; }
.e1 { width: 53px; } .e2 { width: 71px; } .e3 { width: 74px; }
.clear { width: 38px; text-align: center; color: #444; }
.esearch { margin-left: auto; width: 166px; height: 17px; background: #f5f6f2; display: flex; align-items: center; padding-left: 3px; color: #6a6f78; margin-right: 1px; }
.esearch span:first-child { flex: 1; }
.ehead { height: 19px; flex: none; background: #f5f5f5; display: flex; align-items: center; margin: 0 1px 0 2px; color: #555; }
.ehead span { height: 100%; display: flex; align-items: center; border-right: 1px solid #d0d0d0; padding-left: 3px; flex: none; }
.h0 { width: 19px; } .h1 { width: 22px; } .h2 { width: 600px; } .h3 { width: 124px; } .h4 { width: 125px; } .h5 { width: 29px; } .h6 { width: 17px; border-right: 0; }
.elist { flex: 1; }
.erow { display: flex; align-items: center; padding: 1px 0 0 26px; gap: 5px; height: 17px; color: #3c3c3c; white-space: nowrap; font-size: 10px; }
.erow svg { width: 12px; height: 12px; }

.statusbar { height: 20px; flex: none; background: #0f86bf; border-bottom: 1px solid #4ea6cf; display: flex; align-items: center; color: #dcecf6; font-size: 10px; }
.st-ic { width: 14px; height: 11px; margin-left: 3px; }
.ready { margin-left: 6px; width: 604px; }
.st-lock { width: 13px; height: 13px; }
.s-ln { margin-left: 5px; width: 76px; }
.s-col { width: 76px; }
.s-ch { width: 114px; }
.s-ins { width: 227px; }
.st-up { width: 8px; height: 10px; }
.s-src { margin-left: 7px; width: 105px; }
.upcaret { border: 3px solid transparent; border-bottom: 3px solid #e4f0f8; border-top: 0; margin-left: 1px; }
```
